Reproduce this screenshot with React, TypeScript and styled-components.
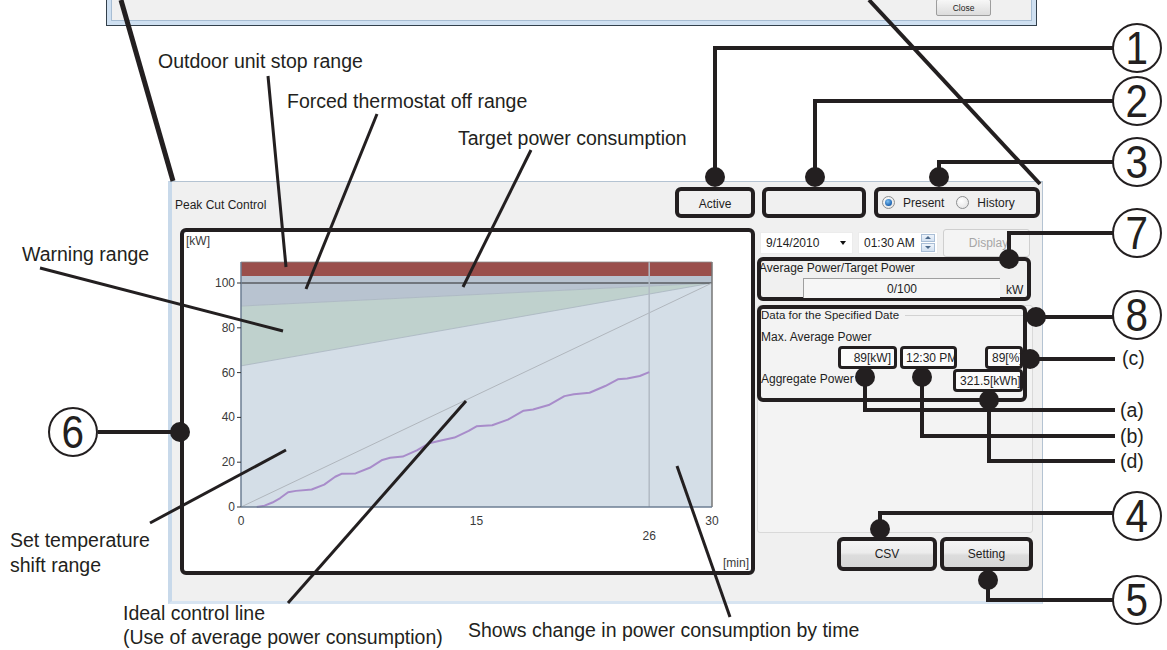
import React from "react";
import styled, { createGlobalStyle } from "styled-components";

const INK = "#231f20";
const UI_FONT = `"Liberation Sans", Arial, sans-serif`;

const GlobalStyle = createGlobalStyle`
  html, body { margin: 0; padding: 0; background: #ffffff; }
  body { font-family: ${UI_FONT}; }
`;

const Page = styled.div`
  position: relative;
  width: 1167px;
  height: 650px;
  overflow: hidden;
  background: #ffffff;
  font-family: ${UI_FONT};
`;

/* bottom of the previous window, cut by the top of the page */
const TopWindow = styled.div`
  box-sizing: border-box;
  margin-left: 106px;
  width: 931px;
  height: 26px;
  padding: 0 4px 4px;
  background: #cfe0f1;
  border: 1px solid #33404c;
  border-top: none;
`;

const TopWindowBody = styled.div`
  box-sizing: border-box;
  height: 100%;
  display: flex;
  justify-content: flex-end;
  align-items: flex-start;
  padding-right: 40px;
  background: #f0f0f0;
  border: 1px solid #a7bdd3;
  border-top: none;
`;

const CloseButton = styled.div`
  box-sizing: border-box;
  width: 55px;
  height: 17px;
  margin-top: -1px;
  display: flex;
  align-items: center;
  justify-content: center;
  font-size: 8.5px;
  color: #222;
  border: 1px solid #9d9d9d;
  border-radius: 2px;
  background: linear-gradient(#f7f7f7, #dcdcdc);
`;

const Window = styled.div`
  box-sizing: border-box;
  width: 875px;
  height: 423px;
  margin: 155px 0 0 168px;
  padding: 5px 2px 0 3px;
  background: #f0f0f0;
  border: 1px solid #b4c3d2;
  border-left: 4px solid #c8d9ea;
  border-bottom: 3px solid #d7e4f1;
  font-size: 12px;
  color: #1e1e1e;
`;

const Header = styled.div`
  display: flex;
  align-items: center;
  height: 31px;
`;

const Title = styled.div`
  flex: 1;
  padding-top: 4px;
  font-size: 12px;
`;

const Highlight = styled.div<{ $w: number; $h: number; $gap?: number }>`
  box-sizing: border-box;
  flex: none;
  width: ${(p) => p.$w}px;
  height: ${(p) => p.$h}px;
  margin-left: ${(p) => p.$gap ?? 0}px;
  border: 4px solid ${INK};
  border-radius: 6px;
  background: #f0f0f0;
`;

const ActiveBox = styled(Highlight)`
  display: flex;
  align-items: center;
  justify-content: center;
  padding-top: 3px;
`;

const RadioBox = styled(Highlight)`
  display: flex;
  align-items: center;
  padding-left: 4px;
`;

const RadioDot = styled.span<{ $on?: boolean; $gap?: number }>`
  box-sizing: border-box;
  width: 13px;
  height: 13px;
  margin-left: ${(p) => p.$gap ?? 0}px;
  border-radius: 50%;
  border: 1px solid #8d8f91;
  background: radial-gradient(circle at 40% 35%, #ffffff 0%, #e2e2e2 90%);
  display: flex;
  align-items: center;
  justify-content: center;
  &::after {
    content: "";
    display: ${(p) => (p.$on ? "block" : "none")};
    width: 7px;
    height: 7px;
    border-radius: 50%;
    background: radial-gradient(circle at 40% 35%, #7fc0f2 0%, #1b62b0 70%, #0d3f7a 100%);
  }
`;

const RadioText = styled.span`
  margin-left: 8px;
  font-size: 12px;
`;

const Body = styled.div`
  display: flex;
  gap: 2px;
  margin: 10px 0 0 5px;
`;

const ChartBox = styled.div`
  box-sizing: border-box;
  width: 575px;
  height: 347px;
  border: 4px solid ${INK};
  border-radius: 6px;
  background: #ffffff;
  overflow: hidden;
`;

const RightColumn = styled.div`
  width: 276px;
  display: flex;
  flex-direction: column;
`;

const ControlRow = styled.div`
  display: flex;
  align-items: center;
  height: 29px;
  padding-left: 3px;
  gap: 5px;
`;

const InputBox = styled.div<{ $w: number }>`
  box-sizing: border-box;
  width: ${(p) => p.$w}px;
  height: 22px;
  display: flex;
  align-items: center;
  padding-left: 5px;
  background: #ffffff;
  border: 1px solid #ececec;
  font-size: 12px;
`;

const Caret = styled.span`
  margin-left: auto;
  margin-right: 6px;
  width: 0;
  height: 0;
  border-left: 3.5px solid transparent;
  border-right: 3.5px solid transparent;
  border-top: 4px solid #111;
`;

const Spin = styled.div`
  margin-left: auto;
  margin-right: 2px;
  width: 14px;
  height: 18px;
  display: flex;
  flex-direction: column;
  gap: 1px;
`;

const SpinHalf = styled.div<{ $up?: boolean }>`
  flex: 1;
  box-sizing: border-box;
  border: 1px solid #a9bed6;
  background: linear-gradient(#eef4fb, #d3e1f1);
  display: flex;
  align-items: center;
  justify-content: center;
  &::after {
    content: "";
    border-left: 3px solid transparent;
    border-right: 3px solid transparent;
    ${(p) => (p.$up ? "border-bottom: 3px solid #4d6a8c;" : "border-top: 3px solid #4d6a8c;")}
  }
`;

const DisabledButton = styled.div`
  box-sizing: border-box;
  width: 87px;
  height: 28px;
  display: flex;
  align-items: center;
  justify-content: center;
  padding-left: 4px;
  border: 1px solid #cfcfcf;
  border-radius: 3px;
  background: #f4f4f4;
  color: #a6a6a6;
  font-size: 12px;
`;

const PowerBox = styled(Highlight)`
  background: transparent;
  padding-top: 1px;
`;

const SmallText = styled.div<{ $mt?: number; $ml?: number }>`
  margin-top: ${(p) => p.$mt ?? 0}px;
  margin-left: ${(p) => p.$ml ?? 0}px;
  height: 13px;
  line-height: 13px;
  font-size: 12px;
  white-space: nowrap;
`;

const PowerRow = styled.div`
  display: flex;
  align-items: flex-end;
  margin-top: 3px;
  margin-left: 42px;
`;

const ReadOnlyField = styled.div`
  box-sizing: border-box;
  width: 197px;
  height: 20px;
  display: flex;
  align-items: center;
  justify-content: center;
  background: #f6f6f6;
  border-top: 1px solid #9f9f9f;
  border-left: 1px solid #9f9f9f;
  font-size: 12px;
`;

const Unit = styled.span`
  margin-left: 6px;
  padding-bottom: 1px;
  font-size: 12px;
`;

const GroupArea = styled.div`
  box-sizing: border-box;
  margin-top: 4px;
  width: 276px;
  height: 228px;
  border: 1px solid #d9d9d9;
  border-radius: 3px;
  background: #f3f3f3;
`;

const DataBox = styled(Highlight)`
  margin: -1px 0 0 -1px;
  background: #f3f3f3;
  display: flex;
  flex-direction: column;
`;

const GroupTitle = styled.div`
  display: flex;
  align-items: center;
  height: 12px;
  font-size: 11.5px;
  white-space: nowrap;
  &::after {
    content: "";
    flex: 1;
    margin-left: 6px;
    border-top: 1px solid #d2d2d2;
  }
`;

const FieldRow = styled.div`
  display: flex;
  height: 23px;
  margin-top: 2px;
  padding-left: 77px;
`;

const AggRow = styled.div`
  display: flex;
  justify-content: space-between;
  height: 25px;
`;

const AggLabel = styled.div`
  height: 20px;
  line-height: 20px;
  font-size: 12px;
`;

const Field = styled.div<{ $w: number; $gap?: number; $align?: string; $pad?: number }>`
  box-sizing: border-box;
  flex: none;
  width: ${(p) => p.$w}px;
  height: 23px;
  margin-left: ${(p) => p.$gap ?? 0}px;
  padding: 0 3px 0 ${(p) => p.$pad ?? 3}px;
  display: flex;
  align-items: center;
  justify-content: ${(p) => p.$align ?? "flex-end"};
  overflow: hidden;
  white-space: nowrap;
  border: 3.5px solid ${INK};
  border-radius: 4px;
  background: #fbfbfb;
  font-size: 12px;
`;

const ButtonRow = styled.div`
  display: flex;
  gap: 3px;
  margin-top: 4px;
  padding-left: 80px;
`;

const FaceButton = styled(Highlight)`
  display: flex;
  align-items: center;
  justify-content: center;
  background: linear-gradient(#f5f5f5 0%, #ececec 45%, #dcdcdc 55%, #d6d6d6 100%);
  font-size: 12px;
`;

/* annotation layer */
const Overlay = styled.svg`
  position: absolute;
  left: 0;
  top: 0;
  z-index: 2;
  pointer-events: none;
`;

const Note = styled.div<{ $x: number; $y: number }>`
  position: absolute;
  left: ${(p) => p.$x}px;
  top: ${(p) => p.$y - 12}px;
  z-index: 3;
  line-height: 24px;
  font-size: 19.5px;
  color: ${INK};
  white-space: nowrap;
`;

const Callout = styled.div<{ $x: number; $y: number }>`
  position: absolute;
  left: ${(p) => p.$x - 25}px;
  top: ${(p) => p.$y - 25}px;
  z-index: 3;
  box-sizing: border-box;
  width: 50px;
  height: 50px;
  border: 2.5px solid ${INK};
  border-radius: 50%;
  background: #ffffff;
  display: flex;
  align-items: center;
  justify-content: center;
  font-size: 46px;
  line-height: 1;
  color: ${INK};
`;

const Digit = styled.span`
  display: inline-block;
  transform: scaleX(0.88);
`;

const X = (t: number) => 57 + t * 15.7;
const Y = (k: number) => 275 - k * 2.24;

const USAGE: [number, number][] = [
  [1, 0], [1.5, 0.6], [2, 2], [2.5, 4], [3, 6.6], [3.5, 7.2], [4.5, 7.8], [5.3, 10],
  [6, 13.5], [6.4, 14.8], [7.3, 15], [8.2, 17.5], [9, 21], [9.5, 22], [10.3, 22.5],
  [11.2, 25.3], [12, 28.5], [12.6, 29.5], [13.6, 31], [14.5, 34], [15, 36], [16, 36.5],
  [17, 39], [18, 43], [18.6, 43.5], [19.6, 45.5], [20.6, 49.5], [21.2, 50.3], [22.2, 51],
  [23.2, 54], [24, 57], [24.6, 57.4], [25.4, 58.5], [26, 60.2],
];

function PowerChart() {
  const pts = (list: [number, number][]) => list.map(([t, k]) => `${X(t)},${Y(k)}`).join(" ");
  const label = { fontFamily: UI_FONT, fontSize: 12, fill: "#3a3a3a" };
  return (
    <svg width={567} height={339}>
      <rect x={X(0)} y={30} width={X(30) - X(0)} height={Y(0) - 30} fill="#d4dee7" />
      <polygon points={pts([[0, 103.1], [30, 103.1], [30, 100], [0, 89.7]])} fill="#b8c3d0" />
      <polygon points={pts([[0, 89.7], [30, 100], [0, 63]])} fill="#bfd1cd" />
      <polyline points={pts([[0, 89.7], [30, 100]])} stroke="#a9b5c0" strokeWidth={0.8} fill="none" />
      <polyline points={pts([[0, 63], [30, 100]])} stroke="#a9b5c0" strokeWidth={0.8} fill="none" />
      <rect x={X(0)} y={30} width={X(30) - X(0)} height={14} fill="#9a4f4c" />
      <line x1={X(0)} y1={Y(100)} x2={X(30)} y2={Y(100)} stroke="#2a2a2a" strokeWidth={1.2} />
      <line x1={X(0)} y1={Y(0)} x2={X(30)} y2={Y(100)} stroke="#b0b6bd" strokeWidth={1} />
      <line x1={X(26)} y1={30} x2={X(26)} y2={Y(0)} stroke="#b1bac4" strokeWidth={1.5} />
      <polyline points={pts(USAGE)} stroke="#a88cca" strokeWidth={2} fill="none" strokeLinejoin="round" />
      <line x1={X(30)} y1={30} x2={X(30)} y2={Y(0)} stroke="#767676" strokeWidth={1.5} />
      <line x1={X(0)} y1={30} x2={X(30)} y2={30} stroke="#8a8a8a" strokeWidth={0.8} />
      <line x1={X(0)} y1={30} x2={X(0)} y2={Y(0)} stroke="#6c7e93" strokeWidth={1.5} />
      <line x1={X(0)} y1={Y(0)} x2={X(30)} y2={Y(0)} stroke="#6c7e93" strokeWidth={1.5} />
      {[0, 20, 40, 60, 80, 100].map((k) => (
        <g key={k}>
          <line x1={X(0) - 4} y1={Y(k)} x2={X(0)} y2={Y(k)} stroke="#333" strokeWidth={1} />
          <text x={X(0) - 6} y={Y(k)} textAnchor="end" dominantBaseline="central" {...label}>
            {k}
          </text>
        </g>
      ))}
      <text x={2} y={9} dominantBaseline="central" {...label}>[kW]</text>
      <text x={X(0)} y={289} textAnchor="middle" dominantBaseline="central" {...label}>0</text>
      <text x={X(15)} y={289} textAnchor="middle" dominantBaseline="central" {...label}>15</text>
      <text x={X(30)} y={289} textAnchor="middle" dominantBaseline="central" {...label}>30</text>
      <text x={X(26)} y={304} textAnchor="middle" dominantBaseline="central" {...label}>26</text>
      <text x={565} y={331} textAnchor="end" dominantBaseline="central" {...label}>[min]</text>
    </svg>
  );
}

const LEADERS = [
  "M715 177 V48 H1113",
  "M815 177 V101 H1113",
  "M939 177 V162 H1113",
  "M1009 259 V233 H1113",
  "M1036 317 H1113",
  "M1030 359 H1115",
  "M865 377 V410 H1115",
  "M922 377 V436 H1115",
  "M989 400 V461 H1115",
  "M880 529 V513 H1113",
  "M988 580 V600 H1113",
  "M180 432 H98",
];

const DOTS: [number, number][] = [
  [715, 177], [815, 177], [939, 177], [1009, 259], [1036, 317], [1030, 359],
  [865, 377], [922, 377], [989, 400], [880, 529], [988, 580], [180, 432],
];

const POINTERS: [number, number, number, number, number][] = [
  [121, 0, 173, 181, 5],
  [869, 0, 1040, 184, 4],
  [268, 76, 286, 267, 3],
  [377, 114, 306, 289, 3],
  [531, 150, 463, 287, 3],
  [40, 268, 283, 331, 3],
  [150, 523, 286, 450, 3],
  [288, 603, 466, 401, 3],
  [677, 466, 730, 617, 3],
];

const NOTES: { x: number; y: number; text: string }[] = [
  { x: 158, y: 61, text: "Outdoor unit stop range" },
  { x: 287, y: 101, text: "Forced thermostat off range" },
  { x: 458, y: 138, text: "Target power consumption" },
  { x: 22, y: 254, text: "Warning range" },
  { x: 10, y: 540, text: "Set temperature" },
  { x: 10, y: 565, text: "shift range" },
  { x: 123, y: 613, text: "Ideal control line" },
  { x: 123, y: 637, text: "(Use of average power consumption)" },
  { x: 468, y: 630, text: "Shows change in power consumption by time" },
  { x: 1122, y: 358, text: "(c)" },
  { x: 1120, y: 410, text: "(a)" },
  { x: 1120, y: 436, text: "(b)" },
  { x: 1120, y: 461, text: "(d)" },
];

const CALLOUTS: { x: number; y: number; n: string }[] = [
  { x: 1137, y: 48, n: "1" },
  { x: 1137, y: 101, n: "2" },
  { x: 1137, y: 162, n: "3" },
  { x: 1137, y: 233, n: "7" },
  { x: 1137, y: 315, n: "8" },
  { x: 1137, y: 516, n: "4" },
  { x: 1137, y: 600, n: "5" },
  { x: 73, y: 432, n: "6" },
];

export default function App() {
  return (
    <Page>
      <GlobalStyle />
      <TopWindow>
        <TopWindowBody>
          <CloseButton>Close</CloseButton>
        </TopWindowBody>
      </TopWindow>

      <Window>
        <Header>
          <Title>Peak Cut Control</Title>
          <ActiveBox $w={80} $h={31}>Active</ActiveBox>
          <Highlight $w={104} $h={31} $gap={7} />
          <RadioBox $w={166} $h={31} $gap={8}>
            <RadioDot $on />
            <RadioText>Present</RadioText>
            <RadioDot $gap={12} />
            <RadioText>History</RadioText>
          </RadioBox>
        </Header>

        <Body>
          <ChartBox>
            <PowerChart />
          </ChartBox>

          <RightColumn>
            <ControlRow>
              <InputBox $w={93}>
                9/14/2010
                <Caret />
              </InputBox>
              <InputBox $w={80}>
                01:30 AM
                <Spin>
                  <SpinHalf $up />
                  <SpinHalf />
                </Spin>
              </InputBox>
              <DisabledButton>Display</DisabledButton>
            </ControlRow>

            <PowerBox $w={274} $h={44}>
              <SmallText $ml={-2}>Average Power/Target Power</SmallText>
              <PowerRow>
                <ReadOnlyField>0/100</ReadOnlyField>
                <Unit>kW</Unit>
              </PowerRow>
            </PowerBox>

            <GroupArea>
              <DataBox $w={270} $h={97}>
                <GroupTitle>Data for the Specified Date</GroupTitle>
                <SmallText $mt={10}>Max. Average Power</SmallText>
                <FieldRow>
                  <Field $w={59}>89[kW]</Field>
                  <Field $w={57} $gap={3} $align="flex-start">12:30 PM</Field>
                  <Field $w={38} $gap={28} $align="flex-start" $pad={4}>89[%]</Field>
                </FieldRow>
                <AggRow>
                  <AggLabel>Aggregate Power</AggLabel>
                  <Field $w={70} $align="flex-start" $pad={4}>321.5[kWh]</Field>
                </AggRow>
              </DataBox>
            </GroupArea>

            <ButtonRow>
              <FaceButton $w={100} $h={34}>CSV</FaceButton>
              <FaceButton $w={93} $h={34}>Setting</FaceButton>
            </ButtonRow>
          </RightColumn>
        </Body>
      </Window>

      <Overlay width={1167} height={650}>
        {POINTERS.map(([x1, y1, x2, y2, w], i) => (
          <line key={i} x1={x1} y1={y1} x2={x2} y2={y2} stroke={INK} strokeWidth={w} />
        ))}
        {LEADERS.map((d, i) => (
          <path key={i} d={d} stroke={INK} strokeWidth={4} fill="none" />
        ))}
        {DOTS.map(([cx, cy], i) => (
          <circle key={i} cx={cx} cy={cy} r={10} fill={INK} />
        ))}
      </Overlay>

      {NOTES.map((n) => (
        <Note key={n.text} $x={n.x} $y={n.y}>
          {n.text}
        </Note>
      ))}
      {CALLOUTS.map((c) => (
        <Callout key={c.n} $x={c.x} $y={c.y}>
          <Digit>{c.n}</Digit>
        </Callout>
      ))}
    </Page>
  );
}
